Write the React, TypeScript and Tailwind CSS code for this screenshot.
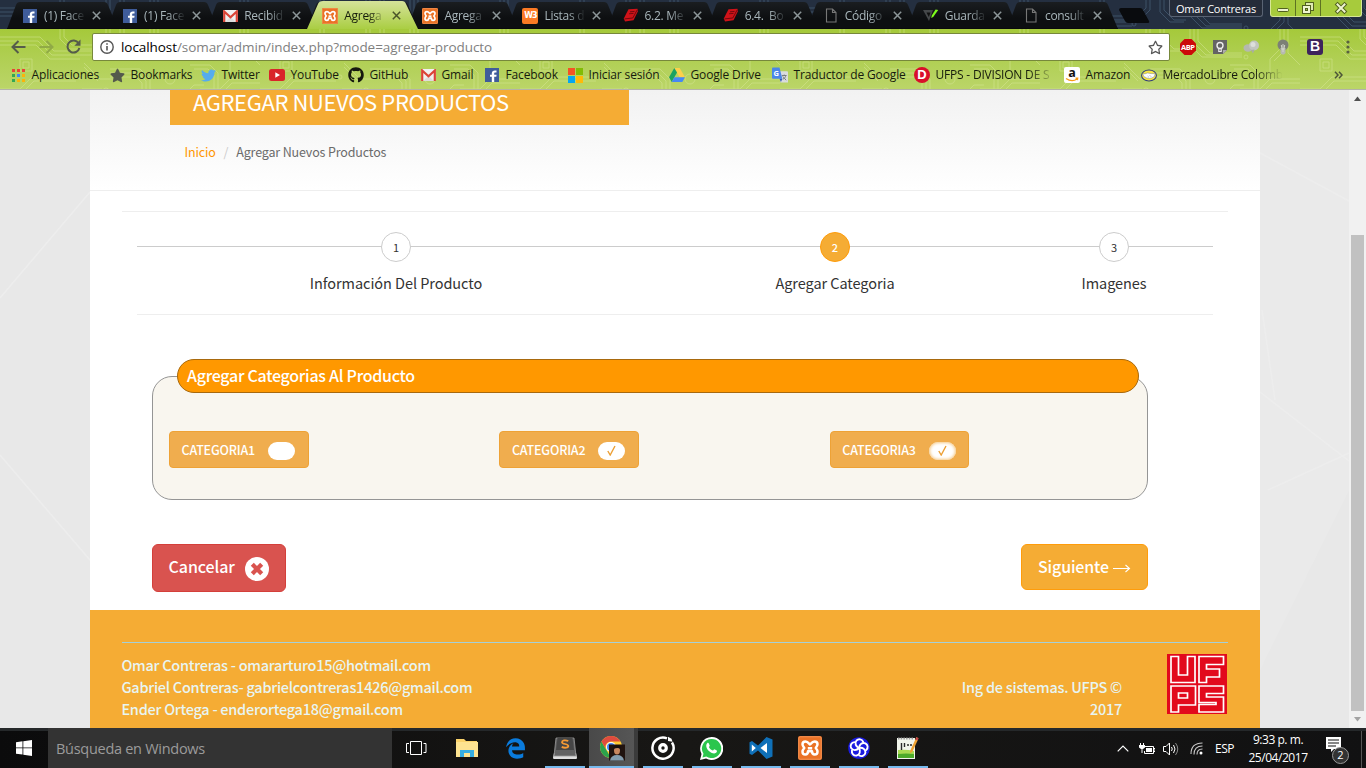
import React from "react";
import { FaGithub, FaTwitter, FaStar, FaRegStar } from "react-icons/fa";
import { FaEdgeLegacy } from "react-icons/fa6";

type IconProps = { size?: number };

const Facebook = () => (
  <svg width="14" height="14" viewBox="0 0 14 14"><rect width="14" height="14" fill="#3f5c9a" /><path d="M9.2 14V8.800h2.100l.3-2.100H9.200V5.500c0-.7.2-1 1-1h1.300V2.500C11 2.400 10.400 2.400 9.800 2.400 8 2.400 6.800 3.500 6.800 5.200v1.500H5v2.100h1.800V14z" fill="#fff" /></svg>
);
const Gmail = () => (
  <svg width="15" height="12" viewBox="0 0 15 12"><rect width="15" height="12" rx="1" fill="#f1f1f1" /><path d="M2 12l5.500-5 5.500 5z" fill="#ddd" /><path d="M1.200 12V1.500l6.300 5.700 6.300-5.700V12" fill="none" stroke="#db4437" strokeWidth="2.200" /></svg>
);
const Xampp = ({ size = 16 }: IconProps) => (
  <svg width={size} height={size} viewBox="0 0 24 24">
    <rect width="24" height="24" rx="2" fill="#ea7226" />
    <rect x=".8" y=".8" width="22.400" height="22.400" rx="1.500" fill="none" stroke="#f29a62" strokeWidth=".8" />
    <path d="M7.500 5.500c-2 0-3 1.300-3 2.800 0 1.600 1 2.700 1.800 3.700-.9 1-1.800 2-1.800 3.700s1 2.800 2.800 2.800 2.700-1.300 2.700-3.200h4c0 1.900.9 3.200 2.700 3.200s2.800-1.100 2.800-2.800-.9-2.700-1.800-3.700c.9-1 1.800-2.100 1.800-3.700 0-1.500-1-2.800-3-2.800-1.900 0-3 1.400-4.500 3-1.500-1.600-2.600-3-4.500-3z" fill="none" stroke="#fff" strokeWidth="2.500" strokeLinejoin="round" />
    <path d="M9.800 12.300h4.400" stroke="#fff" strokeWidth="2.600" />
  </svg>
);
const W3 = () => (
  <div className="flex h-4 w-4 items-center justify-center rounded-[2px] bg-[#fb7a24] font-['DejaVu_Sans'] text-[8px] font-bold tracking-[-1px] text-white">W3</div>
);
const Book = () => (
  <svg width="16" height="15" viewBox="0 0 16 15"><path d="M5.500 1.300L14.500 .8l.3 2.700-4.300 8.700L2 13.500.8 10.500z" fill="#cf1219" /><path d="M7 3.800l4.500-.4M6 5.800l4.500-.4" stroke="#6b080c" strokeWidth=".9" fill="none" /><path d="M1.600 10.900l8.200-.9L14 2.200" stroke="#5a0609" strokeWidth=".8" fill="none" /></svg>
);
const Page = () => (
  <svg width="12" height="15" viewBox="0 0 12 15"><path d="M1.500 1h6l3.500 3.500V14h-9.500zM7.500 1v3.500H11" fill="none" stroke="#777" strokeWidth="1.100" /></svg>
);
const Check7 = () => (
  <svg width="16" height="14" viewBox="0 0 16 14"><path d="M0 1h10l-4 11z" fill="#45484a" /><path d="M3.500 3.500h4L5.800 8z" fill="#111" /><path d="M12.600.5l2.600.4-5 7-2 1 .7-2.600z" fill="#7dfb1c" /></svg>
);

const TABS: { title: string; icon: React.ReactNode; active?: boolean }[] = [
  { title: "(1) Face", icon: <Facebook /> },
  { title: "(1) Face", icon: <Facebook /> },
  { title: "Recibid", icon: <Gmail /> },
  { title: "Agrega", icon: <Xampp />, active: true },
  { title: "Agrega", icon: <Xampp /> },
  { title: "Listas d", icon: <W3 /> },
  { title: "6.2. Me", icon: <Book /> },
  { title: "6.4.\u00a0 Bo", icon: <Book /> },
  { title: "Código", icon: <Page /> },
  { title: "Guarda", icon: <Check7 /> },
  { title: "consult", icon: <Page /> },
];

const Circuit = ({ id, color, opacity }: { id: string; color: string; opacity: number }) => (
  <svg className="absolute inset-0 h-full w-full" aria-hidden="true">
    <defs>
      <pattern id={id} width="260" height="90" patternUnits="userSpaceOnUse">
        <g fill="none" stroke={color} strokeWidth="1" opacity={opacity}>
          <path d="M0 8h40l14 14h38M0 12h38l14 14h40M0 16h36l14 14h30M0 60h20l12-12h44M0 64h22l12-12h42M4 90V74l10-10M60 0v10l10 10h30l10-10V0M64 0v8l8 8h26l8-8V0M110 40h30l10 10v40M110 44h28l8 8v38M110 48h26l6 6v36M150 0v16l12 12h40M154 0v14l12 12h36M158 0v12l12 12h32M200 60h20l10-10h30M200 64h22l10-10h28M180 90V70l14-14h10M184 90V72l12-12M240 0v20l-10 10v14M244 0v22l-10 10M248 0v24l12 12M70 90V72l12-12h20M74 90V74l10-10h20M20 30h12v12H20zM23 33h6v6h-6zM212 76h14v10h-14zM120 0v12l10 10h14M124 0v10l10 10h12M60 72l-12 12v6M56 70l-12 12v8M190 36h20l8 8v20M194 40h14l6 6v18M84 34l16 16h14M84 38l14 14" />
          <circle cx="94" cy="24" r="2" /><circle cx="34" cy="76" r="6" /><circle cx="34" cy="76" r="3" /><circle cx="206" cy="28" r="2" /><circle cx="80" cy="48" r="2" /><circle cx="170" cy="50" r="5" /><circle cx="106" cy="62" r="3" />
        </g>
      </pattern>
    </defs>
    <rect width="100%" height="100%" fill={`url(#${id})`} />
  </svg>
);

const TabStrip = () => (
  <div className="relative h-[29px] overflow-hidden bg-[#242f40]">
    <Circuit id="circuit-dark" color="#53718c" opacity={0.5} />
    <svg className="absolute inset-0 h-[29px] w-full" viewBox="0 0 1366 29" aria-hidden="true">
      <defs>
        <linearGradient id="active-tab" x1="0" y1="0" x2="0" y2="1"><stop offset="0" stopColor="#d5e29a" /><stop offset="1" stopColor="#aace43" /></linearGradient>
        <linearGradient id="idle-tab" x1="0" y1="0" x2="0" y2="1"><stop offset="0" stopColor="#1a1d20" /><stop offset=".6" stopColor="#0d0f11" /></linearGradient>
      </defs>
      {TABS.map((t, i) => (
        <path key={i} d={`M${7 + i * 100} 29L${16 + i * 100} 5Q${17 + i * 100} 2 ${20 + i * 100} 2H${104 + i * 100}Q${107 + i * 100} 2 ${108 + i * 100} 5L${118 + i * 100} 29z`} fill="url(#idle-tab)" />
      ))}
      <path d="M7 28.500H1118" stroke="#090a0b" />
      <path d="M1119 10q0-2 2-2h19q2 0 3 2l6 11q1 2-2 2h-19q-2 0-3-2z" fill="#090b0e" />
      <path d="M307 29L318 4Q319 1 323 1H402Q405 1 406 4L418 29z" fill="url(#active-tab)" />
    </svg>
    <div className="relative flex h-[29px] pl-[22px]">
      {TABS.map((t, i) => (
        <div key={i} className="flex w-[100.1px] shrink-0 items-center pt-[2px]">
          <div className="flex w-4 justify-center">{t.icon}</div>
          <div className={`ml-[6px] w-[44px] overflow-hidden whitespace-pre text-[12px] tracking-[-0.3px] [mask-image:linear-gradient(to_right,black_55%,transparent_95%)] ${t.active ? "text-[#151b0b]" : "text-[#a9b6bb]"}`}>{t.title}</div>
          <svg className="ml-[4px]" width="9" height="9" viewBox="0 0 9 9"><path d="M.8.8l7.400 7.400M8.200.8L.8 8.200" stroke={t.active ? "#4a5428" : "#8c9698"} strokeWidth="1.500" /></svg>
        </div>
      ))}
    </div>
    <div className="absolute left-[1169px] top-0 flex h-[17px] w-[94px] items-center justify-center rounded-b-[3px] border border-t-0 border-[#596373] bg-[#252c39] pt-[3px] text-[11px] font-medium tracking-[-0.2px] text-white">Omar Contreras</div>
    <div className="absolute left-[1270px] top-0 flex h-[17px] w-[92px] rounded-b-[3px] border border-t-0 border-[#d7e795] bg-[#a7cb3c]">
      <div className="flex w-[25px] justify-center border-r border-[#5e7222]"><svg width="14" height="16"><rect x="1.500" y="8.500" width="11" height="3" rx="1" fill="#eef5cf" stroke="#51611f" /></svg></div>
      <div className="flex w-[25px] justify-center border-r border-[#5e7222]"><svg width="14" height="16"><rect x="4.500" y="2.500" width="8" height="8" fill="#dfeab2" stroke="#51611f" /><rect x="1.500" y="5.500" width="8" height="8" fill="#eef5cf" stroke="#51611f" /><rect x="4.500" y="8.500" width="2" height="2" fill="#a7cb3c" stroke="#51611f" /></svg></div>
      <div className="flex flex-1 justify-center"><svg width="14" height="16"><path d="M3.500 4.500l7 7M10.500 4.500l-7 7" stroke="#51611f" strokeWidth="4" strokeLinecap="square" /><path d="M3.500 4.500l7 7M10.500 4.500l-7 7" stroke="#eef5cf" strokeWidth="2" strokeLinecap="square" /></svg></div>
    </div>
  </div>
);

const Toolbar = () => (
  <div className="relative flex h-[34px] items-start pt-[4px]">
    <div className="flex h-[27px] w-[92px] shrink-0 items-center">
      <svg className="ml-[11px]" width="15" height="14" viewBox="0 0 15 14"><path d="M14.500 7H2M7.500 1L1.500 7l6 6" fill="none" stroke="#555c4a" strokeWidth="2" /></svg>
      <svg className="ml-[13px]" width="15" height="14" viewBox="0 0 15 14"><path d="M.5 7H13M7.500 1l6 6-6 6" fill="none" stroke="#90aa46" strokeWidth="2" /></svg>
      <svg className="ml-[12px]" width="15" height="15" viewBox="0 0 15 15"><path d="M12.600 4.200A6 6 0 1 0 13.400 9" fill="none" stroke="#555c4a" strokeWidth="2" /><path d="M14.500.5v6.200H8.300z" fill="#555c4a" /></svg>
    </div>
    <div className="flex h-[28px] w-[1078px] shrink-0 items-center rounded-[2px] border border-[#77883b] bg-white">
      <svg className="ml-[7px]" width="14" height="14" viewBox="0 0 14 14"><circle cx="7" cy="7" r="6.200" fill="none" stroke="#555" strokeWidth="1.400" /><path d="M7 6v4.500M7 3.200v1.600" stroke="#555" strokeWidth="1.600" /></svg>
      <div className="ml-[7px] flex-1 whitespace-nowrap text-[13.500px] tracking-[-0.070px] text-[#808080]"><span className="text-black">localhost</span>/somar/admin/index.php?mode=agregar-producto</div>
      <FaRegStar className="mr-[6px] text-[15px] text-[#555]" />
    </div>
    <div className="flex h-[27px] items-center pl-[9px]">
      <svg width="18" height="18" viewBox="0 0 18 18"><path d="M5.500 1h7L17 5.500v7L12.500 17h-7L1 12.500v-7z" fill="#cc0a0a" /><text x="8.800" y="12" textAnchor="middle" fontSize="7.500" fontWeight="bold" fill="#fff" letterSpacing="-.4">ABP</text></svg>
      <svg className="ml-[15px]" width="16" height="16" viewBox="0 0 16 16"><path d="M1 1h14v10l-4 4H1z" fill="#646464" /><path d="M11 15l4-4h-4z" fill="#aaa" /><circle cx="8" cy="6.500" r="3" fill="none" stroke="#eee" strokeWidth="1.400" /><path d="M6.800 9.500v3h2.400v-3" fill="none" stroke="#eee" strokeWidth="1.200" /></svg>
      <svg className="ml-[15px]" width="16" height="16" viewBox="0 0 16 16"><ellipse cx="5" cy="9" rx="4.500" ry="3.800" fill="#b5b8b0" /><circle cx="11" cy="6.500" r="5" fill="#c3c6c0" /><circle cx="10" cy="5.500" r="2.500" fill="#dddfdb" /><path d="M8 11l2 3.500 1.500-4" fill="#a9aca5" /></svg>
      <svg className="ml-[16px]" width="16" height="16" viewBox="0 0 16 16"><circle cx="8" cy="6" r="5.500" fill="#7c8076" /><path d="M5.500 9h5v5l-1.500 1.500H7L5.500 14z" fill="#b7bab0" /><path d="M8 5v8M6.300 6l1 5M9.700 6l-1 5" stroke="#d3d6cd" /></svg>
      <div className="ml-[16px] flex h-4 w-4 items-center justify-center rounded-[3px] bg-[#3d235c] font-['Liberation_Sans'] text-[14px] font-bold text-white">B</div>
      <svg className="ml-[23px]" width="4" height="14"><circle cx="2" cy="2" r="1.600" fill="#58613f" /><circle cx="2" cy="7" r="1.600" fill="#58613f" /><circle cx="2" cy="12" r="1.600" fill="#58613f" /></svg>
    </div>
  </div>
);

const AppsIcon = () => (
  <svg width="13" height="13">{["#ea4335", "#ea4335", "#ea4335", "#34a853", "#4285f4", "#fbb40a", "#34a853", "#fbb40a", "#fbb40a"].map((c, i) => <rect key={i} x={(i % 3) * 5} y={Math.floor(i / 3) * 5} width="3" height="3" fill={c} />)}</svg>
);
const YouTube = () => <svg width="16" height="12" viewBox="0 0 16 12"><rect width="16" height="12" rx="2.500" fill="#d9252a" /><path d="M6.300 3.200L11 6l-4.700 2.800z" fill="#fff" /></svg>;
const Microsoft = () => <svg width="15" height="15"><path d="M0 0h7v7H0z" fill="#f35325" /><path d="M8 0h7v7H8z" fill="#81bc06" /><path d="M0 8h7v7H0z" fill="#05a6f0" /><path d="M8 8h7v7H8z" fill="#ffba08" /></svg>;
const Drive = () => <svg width="16" height="14" viewBox="0 0 16 14"><path d="M5.300 0h5.400L16 9.200h-5.400z" fill="#fdd04c" /><path d="M5.300 0L8 4.600 2.700 14 0 9.200z" fill="#1ba261" /><path d="M5.400 9.200H16L13.300 14H2.700z" fill="#4688f4" /></svg>;
const Translate = () => <svg width="17" height="17" viewBox="0 0 17 17"><path d="M7 4h9q1 0 1 1v11H9z" fill="#d9dcde" /><path d="M0 1q0-1 1-1h7l3 12H1q-1 0-1-1z" fill="#4a86e8" /><text x="1.500" y="9" fontSize="8" fontWeight="bold" fill="#fff">G</text><path d="M10.500 8.500h5M13 7.500v1M11.500 12.500c2-1 3-2.500 3-4M11.500 9.500l3.500 4" stroke="#72777a" fill="none" /><path d="M8 12h3l-1.500 3.500z" fill="#3156b3" /></svg>;
const Ufps = () => <div className="flex h-4 w-4 items-center justify-center rounded-full bg-[#d90f2a] font-['Liberation_Sans'] text-[13px] font-bold text-white">D</div>;
const Amazon = () => <svg width="16" height="16" viewBox="0 0 16 16"><rect width="16" height="16" rx="2" fill="#fff" /><text x="8" y="10" textAnchor="middle" fontSize="12.500" fontWeight="bold" fill="#111">a</text><path d="M2 11.500q6 4 11 .5M11.500 11.200h2.200l-.3 2" fill="none" stroke="#f79b17" strokeWidth="1.300" /></svg>;
const Mercado = () => <svg width="17" height="13" viewBox="0 0 17 13"><ellipse cx="8.500" cy="6.500" rx="7.900" ry="5.800" fill="#f6e544" stroke="#2d3a7c" strokeWidth="1.100" /><path d="M1.800 4.800q3 .2 5-1 4 1 8.200.7L14.200 7.500q-5.200 4.200-11.200 0z" fill="#fff" stroke="#4c5893" strokeWidth=".4" /><path d="M7 7l1.500 1.500M9 6l2 2" stroke="#8d95b8" strokeWidth=".6" /></svg>;

const BOOKMARKS = [
  { t: "Aplicaciones", w: "w-[99px]", i: <AppsIcon /> },
  { t: "Bookmarks", w: "w-[91px]", i: <FaStar className="text-[15px] text-[#545a4c]" /> },
  { t: "Twitter", w: "w-[69px]", i: <FaTwitter className="text-[15px] text-[#55acee]" /> },
  { t: "YouTube", w: "w-[79px]", i: <YouTube /> },
  { t: "GitHub", w: "w-[72px]", i: <FaGithub className="text-[16px] text-[#15180f]" /> },
  { t: "Gmail", w: "w-[64px]", i: <Gmail /> },
  { t: "Facebook", w: "w-[83px]", i: <Facebook /> },
  { t: "Iniciar sesión", w: "w-[102px]", i: <Microsoft /> },
  { t: "Google Drive", w: "w-[103px]", i: <Drive /> },
  { t: "Traductor de Google", w: "w-[142px]", i: <Translate /> },
  { t: "UFPS - DIVISION DE S", w: "w-[150px]", i: <Ufps />, fade: true },
  { t: "Amazon", w: "w-[77px]", i: <Amazon /> },
  { t: "MercadoLibre Colomb", w: "w-[193px]", i: <Mercado />, fade: true },
];

const Bookmarks = () => (
  <div className="relative flex h-[27px] items-center pb-[3px] pl-[10px]">
    {BOOKMARKS.map((b) => (
      <div key={b.t} className={`flex shrink-0 items-center ${b.w}`}>
        <div className="flex w-4 shrink-0 justify-center">{b.i}</div>
        <div className={`ml-[5.500px] whitespace-nowrap text-[12px] text-[#161b0c] ${b.fade ? "w-[122px] tracking-[-0.200px] [mask-image:linear-gradient(to_right,black_75%,transparent_98%)]" : "tracking-[-0.140px]"}`}>{b.t}</div>
      </div>
    ))}
    <svg width="9" height="8" viewBox="0 0 9 8"><path d="M1 .8L4 4 1 7.200M5 .8L8 4 5 7.200" fill="none" stroke="#4d5638" strokeWidth="1.500" /></svg>
  </div>
);

const STEPS = [
  { n: "1", label: "Información Del Producto", w: "w-[518px]" },
  { n: "2", label: "Agregar Categoria", w: "w-[360px]", on: true },
  { n: "3", label: "Imagenes", w: "w-[198px]" },
];

const CATEGORIES = [
  { name: "CATEGORIA1", checked: false },
  { name: "CATEGORIA2", checked: true },
  { name: "CATEGORIA3", checked: true, focus: true },
];

const UfpsLogo = () => (
  <svg width="60" height="60" viewBox="0 0 60 60" className="mr-px shrink-0">
    <rect width="60" height="60" fill="#e2091c" />
    <g fill="none" stroke="#fff" strokeWidth="1.700">
      <path d="M4 2.500h7.500v18.500h9V2.500h7.500v26H4zM32 2.500h24.500v8h-17v4.500h13v8h-13v5.500H32zM4 32h24.500v19H11.500v7H4zM11.500 39h9v5h-9zM32 32h24.500v7.500h-17v3.500h17v15H32v-7.500h17v-2H32z" />
    </g>
  </svg>
);

const Site = () => (
  <div className="relative flex h-[638px] overflow-hidden bg-[#e8e8e8] font-['Noto_Sans_CJK_SC',sans-serif]">
    <svg className="absolute inset-0 h-full w-full" aria-hidden="true">
      <path d="M1260 0h89v400l-89 180z" fill="#eaeaea" />
      <path d="M0 208L90 102M0 365L90 470M1260 63L1349 111M1260 302L1349 371M1268 400L1349 363M1262 220L1275 310" stroke="#ededed" strokeWidth="1.500" fill="none" />
    </svg>
    <main className="relative ml-[90px] w-[1170px] shrink-0 bg-white">
      <header className="h-[101px] border-b border-[#eee] bg-linear-to-b from-[#f2f2f2] to-white pl-[80px]">
        <h1 className="h-[35px] w-[459px] whitespace-nowrap bg-[#f5ac34] pl-[23px] text-[22px] leading-[23px] tracking-[-0.380px] text-white">AGREGAR NUEVOS PRODUCTOS</h1>
        <nav className="flex pl-[14px] pt-[17px] text-[12.500px] leading-[20px] tracking-[-0.150px] text-[#6b6b6b]"><span className="pl-[0.500px] text-[#ff9600]">Inicio</span><span className="w-[20.500px] text-center text-[#ccc]">/</span><span>Agregar Nuevos Productos</span></nav>
      </header>
      <div className="px-[32px] pt-[20px]">
        <div className="h-px bg-[#eee]" />
        <div className="mx-[15px] h-[103px] border-b border-[#eee] pt-[20px]">
          <div className="flex bg-[linear-gradient(#ccc,#ccc)] bg-[length:100%_1px] bg-[position:0_14px] bg-no-repeat">
            {STEPS.map((s) => (
              <div key={s.n} className={`flex shrink-0 flex-col items-center ${s.w}`}>
                <div className={`flex h-[30px] w-[30px] items-center justify-center rounded-full border text-[11px] ${s.on ? "border-[#ff9c0a] bg-[#f5ac34] font-medium text-white" : "border-[#ccc] bg-white text-[#333]"}`}>{s.n}</div>
                <div className="mt-[9px] whitespace-nowrap text-[14.500px] leading-[24px] tracking-[-0.060px] text-[#333]">{s.label}</div>
              </div>
            ))}
          </div>
        </div>
      </div>
      <section className="relative ml-[62px] mt-[61px] h-[124px] w-[996px] rounded-[20px] border border-[#959595] bg-[#f9f6ef]">
        <h2 className="absolute -top-[18px] left-[24px] h-[34px] w-[962px] rounded-[17px] border border-[#a8690d] bg-[#ff9800] pl-[9px] text-[16px] font-medium leading-[30px] tracking-[-0.280px] text-white">Agregar Categorias Al Producto</h2>
        <div className="flex pl-[16px] pt-[54px]">
          {CATEGORIES.map((c) => (
            <div key={c.name} className="w-[330.400px] shrink-0 last:shrink">
              <button className="flex h-[37px] w-[139.500px] items-center rounded-[4px] border border-[#eea236] bg-[#f0ad4e] pl-[11.500px] text-[12.500px] font-medium tracking-[-0.180px] text-white">
                <span className="w-[86.500px] pt-px text-left">{c.name}</span>
                <span className={`mt-[2px] flex h-[18px] w-[27px] items-center justify-center rounded-[9px] bg-white text-[#f0ad4e] ${c.focus ? "shadow-[inset_0_0_3px_1px_#f5c987]" : ""}`}>
                  {c.checked && <svg width="9" height="11" viewBox="0 0 9 11"><path d="M.8 6l2.400 4L8 1" fill="none" stroke="#ec9f34" strokeWidth="1.400" /></svg>}
                </span>
              </button>
            </div>
          ))}
        </div>
      </section>
      <div className="ml-[62px] mt-[44px] flex h-[66px] w-[996px] items-start justify-between">
        <button className="flex h-[48px] w-[134px] items-center rounded-[6px] border border-[#d43f3a] bg-[#d9534f] pl-[15.500px] text-[16px] font-medium tracking-[-0.080px] text-white">
          <span className="w-[76.500px] pb-[5px] text-left">Cancelar</span>
          <svg className="mt-[2px]" width="24" height="24" viewBox="0 0 24 24"><circle cx="12" cy="12" r="12" fill="#fff" /><path d="M7.300 7.300l9.400 9.400M16.700 7.300l-9.400 9.400" stroke="#d9534f" strokeWidth="4.300" /></svg>
        </button>
        <button className="flex h-[46px] w-[127px] items-center rounded-[6px] border border-[#ff9c0a] bg-[#f5ac34] pl-[16px] text-[16px] font-medium tracking-[-0.150px] text-white">
          <span className="pb-[3px]">Siguiente</span>
          <svg className="ml-[4px] mt-[2px]" width="18" height="10" viewBox="0 0 18 10"><path d="M0 5.500h16M12.500 2L16.500 5.500l-4 3.500" fill="none" stroke="#fff" strokeWidth="1.100" /></svg>
        </button>
      </div>
      <footer className="h-[118px] bg-[#f5ac34] px-[32px] pt-[32px] text-[14.500px] font-medium leading-[22px] tracking-[-0.260px] text-[#e8f5f2]">
        <div className="flex border-t border-[#a5d0d8] pt-[11px]">
          <div className="-ml-[0.600px] flex-1"><p>Omar Contreras - omararturo15@hotmail.com</p><p>Gabriel Contreras- gabrielcontreras1426@gmail.com</p><p>Ender Ortega - enderortega18@gmail.com</p></div>
          <div className="mr-[45px] pt-[22px] text-right"><p>Ing de sistemas. UFPS ©</p><p>2017</p></div>
          <UfpsLogo />
        </div>
      </footer>
    </main>
    <div className="relative ml-[89px] flex w-[17px] flex-col items-center bg-[#f1f1f1]">
      <svg className="mt-[6px]" width="7" height="5"><path d="M0 5L3.500 .5 7 5z" fill="#505050" /></svg>
      <div className="mt-[134px] h-[476px] w-[13px] bg-[#c1c1c1]" />
      <svg className="mt-[6px]" width="7" height="5"><path d="M0 0h7L3.500 4.500z" fill="#a3a3a3" /></svg>
    </div>
  </div>
);

const Explorer = () => <svg width="22" height="19" viewBox="0 0 22 19"><path d="M0 0h8l2 2h11v15H0z" fill="#fbd36b" /><path d="M0 3h22v15H0z" fill="#fde391" /><path d="M4 18v-7h14v7h-4v-4H8v4z" fill="#36ade1" /></svg>;
const Sublime = () => <svg width="24" height="22" viewBox="0 0 24 22"><path d="M1 16h22l1 4.500q0 1.500-1 1.500H1q-1 0-1-1.500z" fill="#dedede" /><path d="M3 1h18l2 18H1z" fill="#626262" stroke="#999" strokeWidth=".8" /><path d="M4.500 1h15l1.500 12H3z" fill="#464646" /><path d="M15.300 4c-3-1.300-6.300-.7-6.300 1.200 0 2.100 6.300 1.500 6.300 3.800 0 1.900-3.900 2.300-6.600.9" stroke="#f79b34" strokeWidth="1.800" fill="none" /></svg>;
const Chrome = () => (
  <svg width="26" height="26" viewBox="0 0 26 26"><circle cx="11" cy="12" r="11" fill="#fcc934" /><path d="M1.500 6.500L6.200 14.700 11 23A11 11 0 0 1 1.500 6.500z" fill="#2ba24c" /><path d="M1.500 6.500A11 11 0 0 1 20.500 6.500H11A5.500 5.500 0 0 0 6 14.500z" fill="#de4b3f" /><circle cx="11" cy="12" r="5" fill="#fff" /><circle cx="11" cy="12" r="4" fill="#4285f4" /><rect x="9" y="9.500" width="16" height="16" fill="#20130f" /><path d="M10 25.500q1-5.500 7-5.500t7 5.500z" fill="#829cae" /><ellipse cx="17" cy="15.500" rx="3" ry="4" fill="#c6865f" /><path d="M13.500 14q0-4.500 3.500-4 4.500 0 3.500 4.500-2-2.500-7-.5z" fill="#17100e" /></svg>
);
const Groove = () => <svg width="24" height="24" viewBox="0 0 24 24"><path d="M16 2.300A10.600 10.600 0 1 0 21 6.500" fill="none" stroke="#fff" strokeWidth="2.500" /><circle cx="12" cy="12" r="3.300" fill="none" stroke="#fff" strokeWidth="3.200" /><path d="M17 .8V5l4.500.8-1-3z" fill="#fff" /></svg>;
const WhatsApp = () => (
  <svg width="23" height="23" viewBox="0 0 24 24"><path d="M12 0a12 12 0 0 0-10.400 17.800L0 24l6.300-1.600A12 12 0 1 0 12 0z" fill="#fff" /><path d="M12 2a10 10 0 0 0-8.400 15.400l-1 3.900 4-1A10 10 0 1 0 12 2z" fill="#2bc64d" /><path d="M7.500 6.500c.8-.8 1.400-.3 1.700.3l.9 2c.2.600-.8 1.300-.8 1.700.8 1.700 2.300 3 4.200 3.700.5 0 1-1.300 1.600-1.300l2.400 1.200c.5.400.1 2-1.200 2.700-2 1-5.200-.4-7.300-2.500S5.500 8.700 7.500 6.500z" fill="#fff" /></svg>
);
const VsCode = () => <svg width="24" height="24" viewBox="0 0 24 24"><path d="M17.500 1L23.500 3.500v17l-6 2.500L9 14.600 3 19l-2.500-1.200V6.200L3 5l6 4.400z" fill="#0f70b8" /><path d="M2.800 8.500v7l4-3.500zM18 7L11.500 12l6.500 5z" fill="#fff" /></svg>;
const Swirl = () => (
  <svg width="24" height="24" viewBox="0 0 24 24">
    <circle cx="12" cy="12" r="10.800" fill="#1a1ae0" />
    {[0, 72, 144, 216, 288].map((a) => <path key={a} transform={`rotate(${a} 12 12)`} d="M12 12C8.500 10.500 7.500 7 9.500 4.500 11.500 2.500 15 3 16.200 5.800" fill="none" stroke="#fff" strokeWidth="1.900" strokeLinecap="round" />)}
  </svg>
);
const Notepad = () => <svg width="24" height="24" viewBox="0 0 24 24"><path d="M1 2h18v21H1z" fill="#f1f4eb" /><path d="M2 14q8-1 16 1v7H2z" fill="#a9db52" /><path d="M2 18q8-1 16 0v4H2z" fill="#4dab2a" /><path d="M2 2.500h16" stroke="#999" strokeDasharray="1.500 1.200" strokeWidth="2" /><path d="M5.500 7v7M8.500 7v4M11 9h2M14 9h2" stroke="#2a2a2a" strokeWidth="1.400" /><path d="M20.500 1l2 1.500-6 13-2.500 2 .3-3z" fill="#f0a231" /><path d="M20.500 1l2 1.500-1 2-2-1z" fill="#c6424b" /></svg>;

const APPS = [
  { i: <Explorer />, open: false },
  { i: <FaEdgeLegacy className="text-[21px] text-[#0a7bdc]" />, open: false },
  { i: <Sublime />, open: true },
  { i: <Chrome />, open: true, focus: true },
  { i: <Groove />, open: true },
  { i: <WhatsApp />, open: true },
  { i: <VsCode />, open: true },
  { i: <Xampp size={24} />, open: true },
  { i: <Swirl />, open: true },
  { i: <Notepad />, open: true },
];

const Taskbar = () => (
  <div className="flex h-[40px] border-t-[3px] border-[#25282a] bg-linear-to-r from-[#0b0b0c] via-[#181715] to-[#111112] text-white">
    <div className="flex w-[48px] items-center justify-center pb-[3px]"><svg width="16" height="16" viewBox="0 0 16 16"><path d="M0 2.200L6.500 1.300V7.500H0zM7.300 1.200L16 0v7.500H7.300zM0 8.300h6.500v6.300L0 13.800zM7.300 8.300H16V16l-8.700-1.200z" fill="#fff" /></svg></div>
    <div className="-mt-[3px] flex w-[344px] items-center bg-[#333] pl-[8px] pt-[1px] text-[14.500px] tracking-[-0.280px] text-[#9b9b9b]">Búsqueda en Windows</div>
    <div className="flex w-[50px] items-center justify-center pb-[3px]"><svg className="ml-[-2px]" width="21" height="14" viewBox="0 0 21 14"><path d="M4.500.5h11v13h-11zM3 2.500H.5v9H3M17.500 2.500h2.500v9h-2.500" fill="none" stroke="#fff" /></svg></div>
    <div className="flex">
      {APPS.map((a, k) => (
        <div key={k} className={`-mt-[3px] flex w-[49px] flex-col items-center justify-between pt-[3px] ${a.focus ? "border-r-[4px] border-[#3b3b3b] bg-linear-to-r from-[#494949] to-[#565656] bg-clip-padding" : ""}`}>
          <div className={`flex h-[34px] items-center ${a.focus ? "pl-[3px]" : ""}`}>{a.i}</div>
          <div className={`h-[2px] ${a.focus ? "w-[45px]" : "w-[40px]"} ${a.open ? "bg-[#76b9ed]" : ""}`} />
        </div>
      ))}
    </div>
    <div className="ml-auto flex items-center">
      <div className="flex items-center pb-[2px]">
        <svg width="12" height="7" viewBox="0 0 12 7"><path d="M.7 6.300L6 1l5.300 5.300" fill="none" stroke="#fff" strokeWidth="1.200" /></svg>
        <svg className="ml-[10px]" width="16" height="12" viewBox="0 0 16 12"><path d="M5 3.500h9.500v7h-9V8M14.500 5.500H16v3h-1.500" fill="none" stroke="#fff" /><path d="M1 0h1v2h2V0h1v2h1v2.500L4 6H3.500v4H2.500V6H2L0 4.500V2h1zM7 5h6v4H7z" fill="#fff" /></svg>
        <svg className="ml-[8px]" width="16" height="14" viewBox="0 0 16 14"><path d="M.5 4.500H3L6.500 1v12L3 9.500H.5z" fill="none" stroke="#fff" /><path d="M8.500 5q1.500 2 0 4M10.500 3q3 4 0 8" fill="none" stroke="#fff" /><path d="M12.500 1q4.500 6 0 12" fill="none" stroke="#888" /></svg>
        <svg className="ml-[11px]" width="13" height="13" viewBox="0 0 13 13"><g fill="none" stroke="#c9c9c9" strokeWidth="1.100"><path d="M1 12Q1 1 12.500 1M4 12.500Q4 4 12.500 4M7 12.500Q7 7 12.500 7" /></g><circle cx="11" cy="11" r="1.500" fill="#fff" /></svg>
        <div className="ml-[12px] w-[19px] text-[12px] tracking-[-0.5px]">ESP</div>
      </div>
      <div className="ml-[13px] w-[62px] whitespace-nowrap pb-[2px] text-center text-[12px] leading-[18px] tracking-[-0.450px]"><div>9:33 p. m.</div><div>25/04/2017</div></div>
      <div className="relative ml-[16px] h-[28px] w-[24px]"><svg width="17" height="16" viewBox="0 0 17 16"><path d="M1 1h15v12H9l-3 3v-3H1z" fill="#fff" /><path d="M3 4h11M3 7h11M3 10h8" stroke="#111" /></svg><div className="absolute bottom-0 right-0 flex h-[17px] w-[17px] items-center justify-center rounded-full border border-[#999] bg-[#333] text-[11px]">2</div></div>
      <div className="ml-[12px] mr-[4px] h-[37px] w-px bg-[#555]" />
    </div>
  </div>
);

export default function App() {
  return (
    <div className="h-[768px] w-[1366px] overflow-hidden font-['Open_Sans','Noto_Sans',sans-serif]">
      <TabStrip />
      <div className="relative h-[61px] border-b border-[#b3b3a9] bg-linear-to-b from-[#a5c93a] to-[#bbd568]">
        <Circuit id="circuit-green" color="#dbe99f" opacity={0.45} />
        <Toolbar />
        <Bookmarks />
      </div>
      <Site />
      <Taskbar />
    </div>
  );
}
